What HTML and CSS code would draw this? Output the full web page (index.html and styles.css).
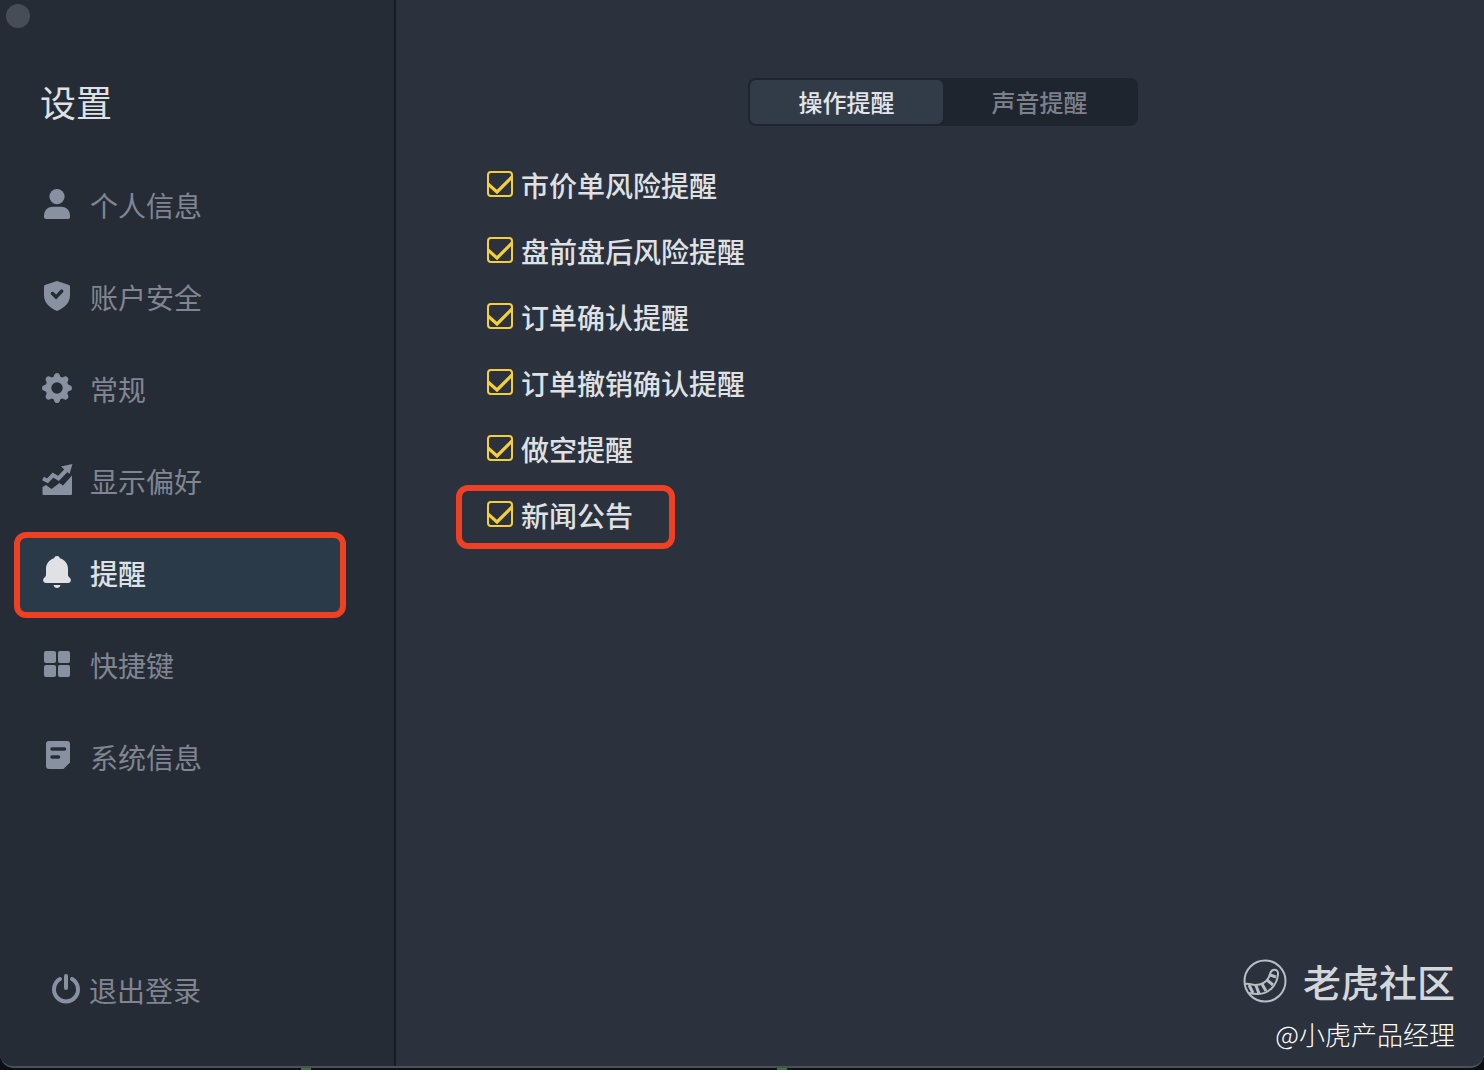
FILE: index.html
```html
<!DOCTYPE html>
<html lang="zh-CN">
<head>
    <meta charset="UTF-8">
    <meta name="viewport" content="width=device-width, initial-scale=1.0">
    <title>设置</title>
    <link rel="stylesheet" href="styles.css">
</head>
<body>

    <div class="settings-window">
        <button class="window-close" type="button" aria-label="关闭"></button>

        <!-- Sidebar -->
        <aside class="sidebar">
            <h1 class="sidebar-title">设置</h1>
            <nav class="sidebar-nav">
                <a href="#profile" class="nav-item">
                    <svg class="nav-icon" viewBox="0 0 32 32">
                        <circle cx="16" cy="8.6" r="7.6"/>
                        <path d="M3 29v-1c0-6 4-9.300 9-9.300h8c5 0 9 3.300 9 9.300v1q0 2-2 2H5q-2 0-2-2z"/>
                    </svg>
                    <span>个人信息</span>
                </a>
                <a href="#security" class="nav-item">
                    <svg class="nav-icon" viewBox="0 0 32 32">
                        <path d="M16 1l12 4q1 .4 1 1.500V15c0 8-5.500 12.500-13 16C8.500 27.500 3 23 3 15V6.500q0-1.100 1-1.500z"/>
                        <path class="cut-line" d="M11.500 13.500l3.600 3.600 5.600-6"/>
                    </svg>
                    <span>账户安全</span>
                </a>
                <a href="#general" class="nav-item">
                    <svg class="nav-icon" viewBox="0 0 32 32">
                        <path fill-rule="evenodd" d="M13.500 2.500Q14 1 16 1t2.500 1.500l.9 2.200 1.900.8 2.200-1q1.700-.5 3 .8t.8 3l-1 2.200.8 1.900 2.400 1Q31 14 31 16t-1.500 2.600l-2.400 1-.8 1.900 1 2.200q.5 1.700-.8 3t-3 .8l-2.200-1-1.900.8-.9 2.200Q18 31 16 31t-2.500-1.500l-.9-2.200-1.900-.8-2.200 1q-1.700.5-3-.8t-.8-3l1-2.200-.8-1.900-2.400-1Q1 18 1 16t1.500-2.600l2.400-1 .8-1.900-1-2.200q-.5-1.700.8-3t3-.8l2.200 1 1.900-.8zM16 10.300a5.700 5.700 0 100 11.400 5.700 5.700 0 000-11.400z"/>
                    </svg>
                    <span>常规</span>
                </a>
                <a href="#display" class="nav-item">
                    <svg class="nav-icon" viewBox="0 0 32 32">
                        <path d="M1.500 23l3.500-2 5.500 4 8-6 3.500 2.500 9-10V30q0 1-1 1H2.500q-1 0-1-1z"/>
                        <path class="trend-line" d="M2 14.500l4.500 2.300 5.500-5.800 5.500 3.500 9-9.500"/>
                        <path d="M20 2.500L31.500 0l-3 10z"/>
                    </svg>
                    <span>显示偏好</span>
                </a>
                <a href="#alerts" class="nav-item nav-item-active">
                    <svg class="nav-icon" viewBox="0 0 32 32">
                        <path d="M16 0c1.500 0 2.500.8 2.800 2.200C23.500 3.500 27 7.500 27 12.500V19q0 1 .8 1.700l1.400 1.500q1 1.100.6 2.700-.5 2.100-2.800 2.100H5q-2.300 0-2.800-2.100-.4-1.600.6-2.700l1.400-1.500Q5 20 5 19v-6.500C5 7.500 8.500 3.500 13.200 2.200 13.500.8 14.500 0 16 0z"/>
                        <path d="M12.500 29h7q-.8 3-3.500 3t-3.500-3z"/>
                    </svg>
                    <span>提醒</span>
                </a>
                <a href="#shortcuts" class="nav-item">
                    <svg class="nav-icon" viewBox="0 0 32 32">
                        <rect x="3" y="3" width="12" height="12" rx="2"/>
                        <rect x="17" y="3" width="12" height="12" rx="2"/>
                        <rect x="3" y="17" width="12" height="12" rx="2"/>
                        <rect x="17" y="17" width="12" height="12" rx="2"/>
                    </svg>
                    <span>快捷键</span>
                </a>
                <a href="#system" class="nav-item">
                    <svg class="nav-icon" viewBox="0 0 32 32">
                        <path d="M8 1h18q3 0 3 3v18.500L22.500 29H8q-3 0-3-3V4q0-3 3-3z"/>
                        <path class="cut-line" d="M11 9h12.500M11 17h6.500"/>
                    </svg>
                    <span>系统信息</span>
                </a>
            </nav>
            <button class="logout-button" type="button">
                <svg class="logout-icon" viewBox="0 0 32 32">
                    <path d="M10 6a12 12 0 1012 0M16 3v12"/>
                </svg>
                <span>退出登录</span>
            </button>
        </aside>

        <!-- Alert settings -->
        <main class="content">
            <div class="tabs" role="tablist">
                <button class="tab tab-active" type="button" role="tab" aria-selected="true">操作提醒</button>
                <button class="tab" type="button" role="tab" aria-selected="false">声音提醒</button>
            </div>

            <div class="option-list">
                <label class="option"><input type="checkbox" class="option-check" checked>市价单风险提醒</label>
                <label class="option"><input type="checkbox" class="option-check" checked>盘前盘后风险提醒</label>
                <label class="option"><input type="checkbox" class="option-check" checked>订单确认提醒</label>
                <label class="option"><input type="checkbox" class="option-check" checked>订单撤销确认提醒</label>
                <label class="option"><input type="checkbox" class="option-check" checked>做空提醒</label>
                <label class="option option-marked"><input type="checkbox" class="option-check" checked>新闻公告</label>
            </div>

            <footer class="credit">
                <div class="credit-brand">
                    <svg class="credit-logo" viewBox="0 0 44 44">
                        <circle cx="22" cy="22" r="20.500"/>
                        <path d="M2 25c4-1 6 1 10 1 7 0 11-2 14-8 1-3 1-6 4-7 3-1 5.500 1 5 4.500C34 26 26 35 15 35q-5 0-9-1"/>
                        <path class="stripe" d="M6 26l4 8M13 26.500l3 8M19 25l4 7M24 21l6 5M27 16l6 2"/>
                    </svg>
                    <span>老虎社区</span>
                </div>
                <div class="credit-author">@小虎产品经理</div>
            </footer>
        </main>
    </div>

</body>
</html>
```

FILE: styles.css
```css
* {
    box-sizing: border-box;
}

body {
    margin: 0;
    background-color: #0c0f16;
    background-image: linear-gradient(#2f7a35, #2f7a35), linear-gradient(#2f7a35, #2f7a35);
    background-repeat: no-repeat;
    background-size: 10px 2px;
    background-position: 301px 100%, 777px 100%;
    font-family: "Noto Sans CJK SC", sans-serif;
    min-height: 100vh;
}

button {
    font-family: inherit;
    border: none;
    background: none;
    cursor: pointer;
}

/* Window */
.settings-window {
    position: relative;
    display: flex;
    min-height: calc(100vh - 2px);
    background-color: #2b323d;
    border-bottom: 2px solid #4c5059;
    border-radius: 0 0 14px 14px;
    overflow: hidden;
}

.window-close {
    position: absolute;
    left: 6px;
    top: 4px;
    width: 24px;
    height: 24px;
    padding: 0;
    border-radius: 50%;
    background-color: #484c55;
}

/* Sidebar */
.sidebar {
    display: flex;
    flex-direction: column;
    flex: 0 0 396px;
    padding: 74px 54px 42px 20px;
    background-color: #262c35;
    border-right: 2px solid #171c24;
}

.sidebar-title {
    margin: 0 0 42px;
    padding-left: 20px;
    color: #dfe1e4;
    font-size: 36px;
    line-height: 54px;
    font-weight: 400;
}

.sidebar-nav {
    display: flex;
    flex-direction: column;
    gap: 18px;
}

.nav-item {
    display: flex;
    align-items: center;
    gap: 17px;
    height: 74px;
    padding: 0 21px 4px;
    border-radius: 6px;
    color: #808591;
    font-size: 28px;
    line-height: 40px;
    text-decoration: none;
}

.nav-icon {
    width: 32px;
    height: 32px;
    margin-bottom: 2px;
    fill: #8791a0;
}

.nav-icon .cut-line {
    fill: none;
    stroke: #262c35;
    stroke-width: 3.5;
    stroke-linecap: round;
}

.nav-icon .trend-line {
    fill: none;
    stroke: #8791a0;
    stroke-width: 4;
}

.nav-item-active {
    background-color: #2a3a48;
    color: #dfe1e4;
    font-weight: 500;
    outline: 6px solid #f04023;
}

.nav-item-active .nav-icon {
    fill: #dfe1e4;
}

/* Logout */
.logout-button {
    display: flex;
    align-items: center;
    align-self: flex-start;
    gap: 7px;
    margin-top: auto;
    padding: 10px 30px 14px;
    color: #808591;
    font-size: 28px;
    line-height: 40px;
}

.logout-icon {
    width: 32px;
    height: 32px;
    margin-bottom: 2px;
    fill: none;
    stroke: #8791a0;
    stroke-width: 4;
    stroke-linecap: round;
}

/* Content */
.content {
    display: flex;
    flex-direction: column;
    flex: 1;
    padding: 78px 29px 12px 35px;
}

.tabs {
    display: flex;
    align-self: center;
    width: 390px;
    height: 48px;
    padding: 2px;
    border-radius: 8px;
    background-color: #1f252e;
}

.tab {
    flex: 1;
    padding: 0;
    border-radius: 6px;
    color: #7b808b;
    font-size: 24px;
    line-height: 36px;
    font-weight: 500;
}

.tab-active {
    background-color: #323c49;
    color: #e3e5e8;
}

/* Check list */
.option-list {
    display: flex;
    flex-direction: column;
    align-items: flex-start;
    gap: 14px;
    padding: 35px 31px;
}

.option {
    display: flex;
    align-items: center;
    gap: 8px;
    height: 52px;
    padding: 0 36px 4px 25px;
    border-radius: 6px;
    color: #dfe1e4;
    font-size: 28px;
    line-height: 40px;
    font-weight: 500;
    cursor: pointer;
}

.option-marked {
    outline: 6px solid #f04023;
}

.option-check {
    appearance: none;
    width: 26px;
    height: 26px;
    margin: 0 0 2px;
    border: 2px solid #f5cf3a;
    border-radius: 4px;
}

.option-check:checked {
    background: url("data:image/svg+xml,%3Csvg xmlns='http://www.w3.org/2000/svg' viewBox='0 0 26 26'%3E%3Cpath d='M1 13l9 8L25 6' fill='none' stroke='%23f5cf3a' stroke-width='3.200'/%3E%3C/svg%3E") center / 100% no-repeat border-box;
}

/* Credit */
.credit {
    display: flex;
    flex-direction: column;
    align-items: flex-end;
    margin-top: auto;
    color: #fff;
    font-size: 26px;
    line-height: 40px;
    font-weight: 300;
}

.credit-brand {
    display: flex;
    align-items: center;
    gap: 16px;
    color: #d3d6db;
    font-size: 38px;
    line-height: 66px;
    font-weight: 500;
}

.credit-logo {
    width: 44px;
    height: 44px;
    fill: none;
    stroke: #b9bdc4;
    stroke-width: 2;
}

.credit-logo .stripe {
    stroke-width: 3;
}
```
